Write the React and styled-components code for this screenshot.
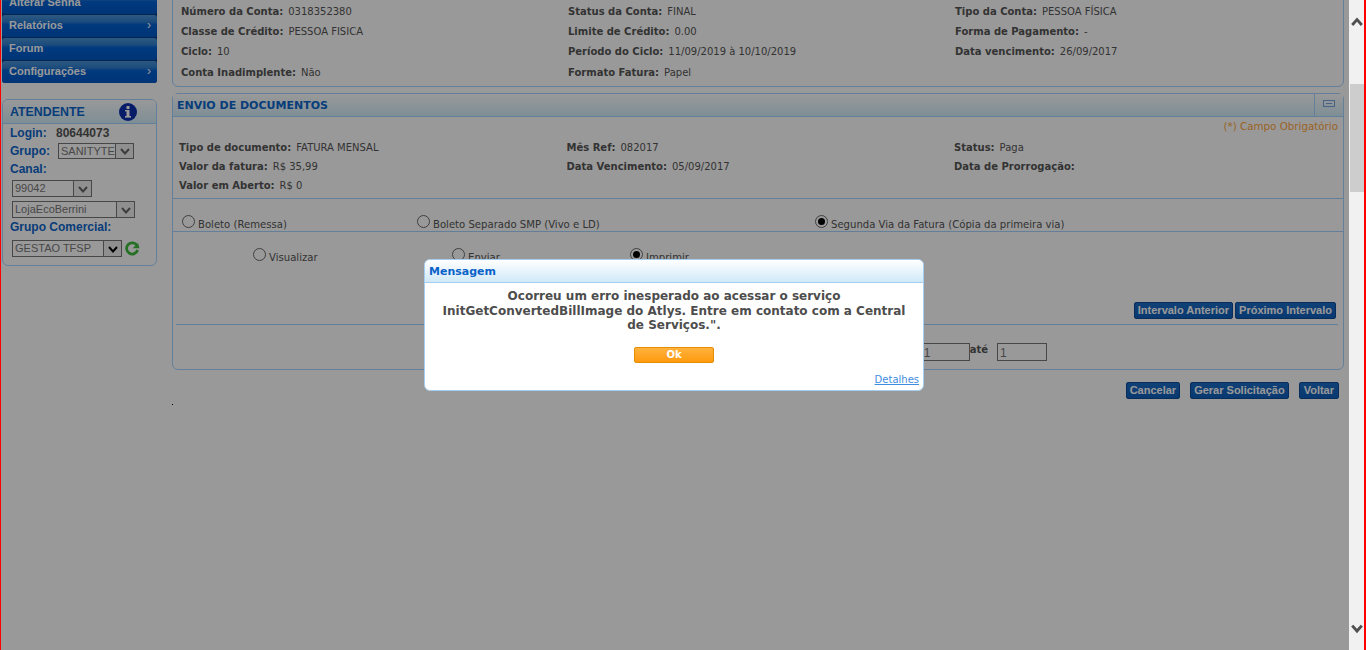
import styled, { createGlobalStyle } from "styled-components";

const GlobalStyle = createGlobalStyle`
  html, body {
    margin: 0;
    padding: 0;
    background: #fff;
    overflow: hidden;
  }
`;

const accountFields = [
  ["Número da Conta:", "0318352380"],
  ["Status da Conta:", "FINAL"],
  ["Tipo da Conta:", "PESSOA FÍSICA"],
  ["Classe de Crédito:", "PESSOA FISICA"],
  ["Limite de Crédito:", "0.00"],
  ["Forma de Pagamento:", "-"],
  ["Ciclo:", "10"],
  ["Período do Ciclo:", "11/09/2019 à 10/10/2019"],
  ["Data vencimento:", "26/09/2017"],
  ["Conta Inadimplente:", "Não"],
  ["Formato Fatura:", "Papel"],
];

const billFields = [
  ["Tipo de documento:", "FATURA MENSAL"],
  ["Mês Ref:", "082017"],
  ["Status:", "Paga"],
  ["Valor da fatura:", "R$ 35,99"],
  ["Data Vencimento:", "05/09/2017"],
  ["Data de Prorrogação:", ""],
  ["Valor em Aberto:", "R$ 0"],
];

const Frame = styled.div`
  width: 1366px;
  height: 650px;
  display: flex;
  overflow: hidden;
  box-sizing: border-box;
  border-left: 1px solid #f00;
  border-right: 2px solid #f00;
`;

const Page = styled.div`
  position: relative;
  flex: 1;
  display: flex;
  align-items: flex-start;
  overflow: hidden;
  background: #fff;
  font-family: "DejaVu Sans", Verdana, sans-serif;
`;

const Overlay = styled.div`
  position: absolute;
  inset: 0;
  background: rgba(0, 0, 0, 0.4);
`;

const Sidebar = styled.aside`
  width: 155px;
  margin: -8px 0 0 1px;
  flex: none;
  font-family: "Liberation Sans", Arial, sans-serif;
`;

const Menu = styled.nav`
  display: flex;
  flex-direction: column;
  gap: 1px;
  background: #083e84;
  border-radius: 3px;
`;

const MenuItem = styled.div`
  height: 22px;
  display: flex;
  align-items: center;
  justify-content: space-between;
  padding: 0 6px 2px 7px;
  box-sizing: border-box;
  border-radius: 3px;
  background: linear-gradient(#4c96d8 0, #2f7fd0 30%, #0060d2 45%, #0059c6 100%);
  color: #fff;
  font-size: 11px;
  font-weight: bold;
`;

const MenuArrow = styled.span`
  font-weight: normal;
  font-size: 12px;
`;

const AgentBox = styled.section`
  margin-top: 16px;
  height: 167px;
  box-sizing: border-box;
  border: 1px solid #a7d4ff;
  border-radius: 6px;
  overflow: hidden;
`;

const AgentHeader = styled.div`
  height: 23px;
  display: flex;
  align-items: center;
  justify-content: space-between;
  padding: 0 19px 0 7px;
  border-bottom: 1px solid #a7d4ff;
  background: linear-gradient(#fff, #d3eefa);
  color: #0d66cc;
  font-size: 12.4px;
  font-weight: bold;
`;

const AgentBody = styled.div`
  padding: 0 7px;
  display: flex;
  flex-direction: column;
`;

const AgentRow = styled.div`
  height: ${(p) => p.$height || 18}px;
  margin-top: ${(p) => p.$top || 0}px;
  margin-left: ${(p) => p.$indent || 0}px;
  display: flex;
  align-items: center;
`;

const AgentLabel = styled.span`
  width: ${(p) => (p.$width ? `${p.$width}px` : "auto")};
  color: #0d66cc;
  font-size: 12px;
  font-weight: bold;
`;

const AgentValue = styled.span`
  color: #555;
  font-size: 12px;
  font-weight: bold;
`;

const SelectBox = styled.div`
  width: ${(p) => p.$width}px;
  height: 100%;
  display: flex;
  justify-content: space-between;
  box-sizing: border-box;
  border: 1px solid #777;
  background: #fff;
`;

const SelectText = styled.span`
  flex: 1;
  min-width: 0;
  padding: 1px 0 0 2px;
  white-space: nowrap;
  color: #777;
  font-size: 11px;
`;

const SelectArrow = styled.span`
  width: 18px;
  flex: none;
  display: flex;
  align-items: center;
  justify-content: center;
  box-sizing: border-box;
  border-left: 1px solid #777;
  background: #eee;
  color: ${(p) => (p.$active ? "#000" : "#666")};
`;

const Main = styled.main`
  width: 1172px;
  margin: -20px 0 0 15px;
  flex: none;
`;

const Panel = styled.section`
  margin-top: ${(p) => p.$top || 0}px;
  box-sizing: border-box;
  border: 1px solid #a7d4ff;
  border-radius: 6px;
`;

const TopGrid = styled.div`
  display: grid;
  grid-template-columns: repeat(3, 387px);
  grid-auto-rows: 20.4px;
  padding: 20px 0 3.4px 8px;
`;

const InfoGrid = styled.div`
  display: grid;
  grid-template-columns: repeat(3, 387.5px);
  grid-auto-rows: 19px;
  padding: 3px 0 3px 6px;
`;

const Field = styled.div`
  display: flex;
  align-items: center;
  gap: 5px;
  font-size: 10px;
  color: #555;
  white-space: nowrap;
`;

const FieldLabel = styled.b`
  font-weight: bold;
`;

const PanelHeader = styled.header`
  height: 22px;
  display: flex;
  justify-content: space-between;
  border-bottom: 1px solid #a7d4ff;
  background: linear-gradient(#fff, #d3eefa);
`;

const PanelTitle = styled.h2`
  margin: 1px 0 0;
  padding-left: 4px;
  align-self: center;
  color: #0d66cc;
  font-size: 11px;
  font-weight: bold;
`;

const CollapseButton = styled.span`
  width: 29px;
  display: flex;
  align-items: center;
  justify-content: center;
  padding-bottom: 3px;
  box-sizing: border-box;
  border-left: 1px solid #a7d4ff;
  color: #7ba6e0;
`;

const Required = styled.div`
  height: 18px;
  padding-right: 5px;
  display: flex;
  align-items: center;
  justify-content: flex-end;
  color: #ffa640;
  font-size: 10.3px;
`;

const RadioRow = styled.div`
  height: ${(p) => p.$height}px;
  display: flex;
  padding: 16px 0 0 ${(p) => p.$left}px;
  box-sizing: border-box;
  border-top: 1px solid #a7d4ff;
`;

const RadioOption = styled.label`
  width: ${(p) => (p.$width ? `${p.$width}px` : "auto")};
  display: flex;
  gap: 3px;
  color: #555;
  font-size: 10.1px;
`;

const RadioCircle = styled.span`
  width: 13px;
  height: 13px;
  flex: none;
  display: flex;
  align-items: center;
  justify-content: center;
  box-sizing: border-box;
  border: 1px solid #6a6a6a;
  border-radius: 50%;
  background: #fff;

  &::after {
    content: "";
    display: ${(p) => (p.$checked ? "block" : "none")};
    width: 7px;
    height: 7px;
    border-radius: 50%;
    background: #000;
  }
`;

const RadioText = styled.span`
  padding-top: 4px;
`;

const ButtonRow = styled.div`
  display: flex;
  justify-content: flex-end;
  gap: ${(p) => p.$gap}px;
  padding-right: ${(p) => p.$right}px;
  margin-top: ${(p) => p.$top || 0}px;
`;

const BlueButton = styled.button`
  height: 17px;
  padding: 0 ${(p) => p.$pad || 3}px;
  border: 1px solid #0f4c96;
  border-radius: 2px;
  background: linear-gradient(#1a6cc6, #0f5fbc);
  color: #fff;
  font-family: "Liberation Sans", Arial, sans-serif;
  font-size: 11px;
  font-weight: bold;
  line-height: 13px;
  white-space: nowrap;
`;

const PanelLine = styled.hr`
  margin: 5px 5px 0 3px;
  border: 0;
  border-top: 1px solid #a7d4ff;
`;

const RangeRow = styled.div`
  height: 44px;
  display: flex;
  justify-content: flex-end;
  align-items: flex-start;
  padding: 18px 296px 0 0;
  box-sizing: border-box;
`;

const RangeLabel = styled.span`
  padding-top: 1px;
  margin-right: 9px;
  color: #555;
  font-size: 10px;
  font-weight: bold;
`;

const RangeInput = styled.span`
  width: 50px;
  height: 18px;
  box-sizing: border-box;
  padding: 2px 0 0 ${(p) => p.$pad || 2}px;
  border: 1px solid #777;
  background: #fff;
  color: #777;
  font-family: "Liberation Sans", Arial, sans-serif;
  font-size: 12px;
`;

const Speck = styled.div`
  width: 1px;
  height: 1px;
  margin-top: 5px;
  background: #000;
`;

const Modal = styled.div`
  position: absolute;
  left: 423px;
  top: 259px;
  width: 500px;
  height: 132px;
  box-sizing: border-box;
  display: flex;
  flex-direction: column;
  border: 1px solid #a5cdf0;
  border-radius: 6px;
  background: #fff;
  overflow: hidden;
`;

const ModalTitle = styled.div`
  height: 23px;
  flex: none;
  padding-left: 4px;
  display: flex;
  align-items: center;
  box-sizing: border-box;
  border-bottom: 1px solid #a5cdf0;
  background: linear-gradient(#fff, #d0e9f8);
  color: #0a63c9;
  font-size: 11px;
  font-weight: bold;
`;

const ModalMessage = styled.p`
  margin: 6px 0 0;
  padding: 0 12px;
  text-align: center;
  color: #4d4d4d;
  font-size: 12px;
  font-weight: bold;
  line-height: 14.5px;
`;

const OkButton = styled.button`
  width: 80px;
  height: 16px;
  margin: 14px auto 0;
  padding: 0;
  border: 1px solid #e58e00;
  border-radius: 2px;
  background: linear-gradient(#ffb23e, #ff9a0f);
  color: #fff;
  font-family: "DejaVu Sans", Verdana, sans-serif;
  font-size: 10px;
  font-weight: bold;
`;

const DetailsLink = styled.a`
  margin-top: 11px;
  padding-right: 4px;
  text-align: right;
  color: #3f8de0;
  font-size: 10px;
  text-decoration: underline;
`;

const Scrollbar = styled.div`
  width: 15px;
  flex: none;
  display: flex;
  flex-direction: column;
  align-items: center;
  background: #f1f1f1;
  color: #505050;
`;

const ScrollUp = styled.span`
  height: 84px;
  padding-top: 16px;
  box-sizing: border-box;
`;

const ScrollThumb = styled.span`
  width: 14px;
  height: 108px;
  margin-left: 1px;
  background: #cdcdcd;
`;

const ScrollDown = styled.span`
  margin-top: auto;
  padding-bottom: 16px;
`;

const Chevron = ({ size = 10, up = false, width = 2 }) => (
  <svg width={size} height={size} viewBox="0 0 10 10" style={{ display: "block" }}>
    <polyline
      points={up ? "1,7.5 5,3 9,7.5" : "1,3 5,7.5 9,3"}
      fill="none"
      stroke="currentColor"
      strokeWidth={width}
    />
  </svg>
);

const InfoIcon = () => (
  <svg width="18" height="18" viewBox="0 0 18 18">
    <circle cx="9" cy="9" r="9" fill="#0a2fb0" />
    <rect x="7.5" y="3" width="3" height="3" fill="#fff" />
    <rect x="7.5" y="7" width="3" height="6.5" fill="#fff" />
    <rect x="6" y="13" width="6" height="1.6" fill="#fff" />
    <rect x="6" y="7" width="2" height="1.4" fill="#fff" />
  </svg>
);

const RefreshIcon = () => (
  <svg width="16" height="17" viewBox="0 0 16 17" style={{ marginLeft: 2 }}>
    <path d="M13 5.5A5.6 5.6 0 1 0 13.6 10" fill="none" stroke="#3fbb3f" strokeWidth="2.8" />
    <path d="M15.5 8.2H8.6L14 3z" fill="#3fbb3f" />
  </svg>
);

const CollapseIcon = () => (
  <svg width="12" height="7" viewBox="0 0 12 7">
    <rect x="0.5" y="0.5" width="11" height="6" fill="none" stroke="currentColor" />
    <rect x="3" y="3" width="6" height="1" fill="currentColor" />
  </svg>
);

const Select = ({ width, value, active }) => (
  <SelectBox $width={width}>
    <SelectText>{value}</SelectText>
    <SelectArrow $active={active}>
      <Chevron size={10} />
    </SelectArrow>
  </SelectBox>
);

const Fields = ({ items }) =>
  items.map(([label, value]) => (
    <Field key={label}>
      <FieldLabel>{label}</FieldLabel>
      {value && <span>{value}</span>}
    </Field>
  ));

const Radio = ({ width, checked, children }) => (
  <RadioOption $width={width}>
    <RadioCircle $checked={checked} />
    <RadioText>{children}</RadioText>
  </RadioOption>
);

const App = () => {
  return (
    <>
      <GlobalStyle />
      <Frame>
        <Page>
          <Sidebar>
            <Menu>
              <MenuItem>Alterar Senha</MenuItem>
              <MenuItem>
                Relatórios <MenuArrow>›</MenuArrow>
              </MenuItem>
              <MenuItem>Forum</MenuItem>
              <MenuItem>
                Configurações <MenuArrow>›</MenuArrow>
              </MenuItem>
            </Menu>
            <AgentBox>
              <AgentHeader>
                ATENDENTE
                <InfoIcon />
              </AgentHeader>
              <AgentBody>
                <AgentRow $height={17}>
                  <AgentLabel $width={46}>Login:</AgentLabel>
                  <AgentValue>80644073</AgentValue>
                </AgentRow>
                <AgentRow $height={16} $top={2}>
                  <AgentLabel $width={48}>Grupo:</AgentLabel>
                  <Select width={76} value="SANITYTE" />
                </AgentRow>
                <AgentRow $height={19}>
                  <AgentLabel>Canal:</AgentLabel>
                </AgentRow>
                <AgentRow $height={17} $top={2} $indent={2}>
                  <Select width={80} value="99042" />
                </AgentRow>
                <AgentRow $height={17} $top={4} $indent={2}>
                  <Select width={123} value="LojaEcoBerrini" />
                </AgentRow>
                <AgentRow>
                  <AgentLabel>Grupo Comercial:</AgentLabel>
                </AgentRow>
                <AgentRow $height={17} $top={4} $indent={2}>
                  <Select width={110} value="GESTAO TFSP" active />
                  <RefreshIcon />
                </AgentRow>
              </AgentBody>
            </AgentBox>
          </Sidebar>

          <Main>
            <Panel>
              <TopGrid>
                <Fields items={accountFields} />
              </TopGrid>
            </Panel>

            <Panel $top={6}>
              <PanelHeader>
                <PanelTitle>ENVIO DE DOCUMENTOS</PanelTitle>
                <CollapseButton>
                  <CollapseIcon />
                </CollapseButton>
              </PanelHeader>
              <Required>(*) Campo Obrigatório</Required>
              <InfoGrid>
                <Fields items={billFields} />
              </InfoGrid>
              <RadioRow $height={33} $left={9}>
                <Radio width={235}>Boleto (Remessa)</Radio>
                <Radio width={398}>Boleto Separado SMP (Vivo e LD)</Radio>
                <Radio checked>Segunda Via da Fatura (Cópia da primeira via)</Radio>
              </RadioRow>
              <RadioRow $height={71} $left={80}>
                <Radio width={199}>Visualizar</Radio>
                <Radio width={178}>Enviar</Radio>
                <Radio checked>Imprimir</Radio>
              </RadioRow>
              <ButtonRow $gap={2} $right={7}>
                <BlueButton>Intervalo Anterior</BlueButton>
                <BlueButton>Próximo Intervalo</BlueButton>
              </ButtonRow>
              <PanelLine />
              <RangeRow>
                <RangeInput $pad={3}>1</RangeInput>
                <RangeLabel>até</RangeLabel>
                <RangeInput>1</RangeInput>
              </RangeRow>
            </Panel>

            <ButtonRow $gap={10} $right={5} $top={12}>
              <BlueButton>Cancelar</BlueButton>
              <BlueButton>Gerar Solicitação</BlueButton>
              <BlueButton $pad={4}>Voltar</BlueButton>
            </ButtonRow>
            <Speck />
          </Main>

          <Overlay />
          <Modal>
            <ModalTitle>Mensagem</ModalTitle>
            <ModalMessage>
              Ocorreu um erro inesperado ao acessar o serviço InitGetConvertedBillImage do Atlys.
              Entre em contato com a Central de Serviços.".
            </ModalMessage>
            <OkButton>Ok</OkButton>
            <DetailsLink href="#detalhes">Detalhes</DetailsLink>
          </Modal>
        </Page>

        <Scrollbar>
          <ScrollUp>
            <Chevron size={12} up width={2.4} />
          </ScrollUp>
          <ScrollThumb />
          <ScrollDown>
            <Chevron size={12} width={2.4} />
          </ScrollDown>
        </Scrollbar>
      </Frame>
    </>
  );
};

export default App;
